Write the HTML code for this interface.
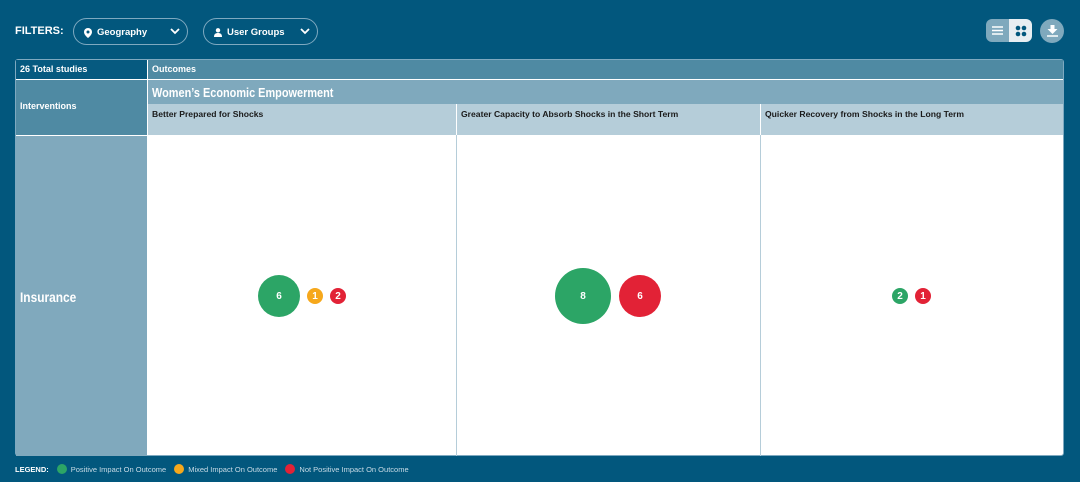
<!DOCTYPE html>
<html><head><meta charset="utf-8"><style>
*{box-sizing:border-box;margin:0;padding:0}
body{width:1080px;height:482px;background:#02577d;font-family:"Liberation Sans",sans-serif;position:relative;overflow:hidden;color:#fff}
.abs{position:absolute}
.pill{position:absolute;top:18px;height:27px;border:1px solid #7ea9c0;border-radius:14px;font-size:9.5px;font-weight:bold;display:flex;align-items:center;padding-left:10px;padding-top:2px}
.b{position:absolute;border-radius:50%;display:flex;align-items:center;justify-content:center;font-size:10px;font-weight:bold;color:#fff;transform:translate(-50%,-50%)}
.g{background:#2ca566}.o{background:#f6a81c}.r{background:#e22236}
.sub{position:absolute;top:104px;height:31px;background:#b5cdd9;color:#1a1a1a;font-size:8.6px;font-weight:bold;padding:5px 0 0 4px}
.leg{font-size:7.5px;color:#c8dbe6;display:flex;align-items:center}
.dot{width:10px;height:10px;border-radius:50%;margin:0 4px 0 8px}
</style></head><body>
<div class="abs" style="left:15px;top:25px;font-size:11px;font-weight:bold">FILTERS:</div>
<div class="pill" style="left:73px;width:115px"><svg width="8" height="10" viewBox="0 0 8 10"><path d="M4 0a4 4 0 0 1 4 4c0 3-4 6-4 6S0 7 0 4a4 4 0 0 1 4-4z" fill="#fff"/><circle cx="4" cy="4" r="1.5" fill="#02577d"/></svg><span style="margin-left:5px">Geography</span><svg class="abs" style="left:96px;top:9px" width="10" height="7" viewBox="0 0 10 7"><path d="M1 1l4 4 4-4" stroke="#fff" stroke-width="1.8" fill="none"/></svg></div>
<div class="pill" style="left:203px;width:115px"><svg width="8" height="9" viewBox="0 0 8 9"><circle cx="4" cy="2.3" r="2.2" fill="#fff"/><path d="M0 9c0-3 1.5-4 4-4s4 1 4 4z" fill="#fff"/></svg><span style="margin-left:5px">User Groups</span><svg class="abs" style="left:96px;top:9px" width="10" height="7" viewBox="0 0 10 7"><path d="M1 1l4 4 4-4" stroke="#fff" stroke-width="1.8" fill="none"/></svg></div>
<div class="abs" style="left:986px;top:19px;width:46px;height:23px;border-radius:6px;overflow:hidden;display:flex">
<div style="width:23px;background:#7fa9bd;display:flex;align-items:center;justify-content:center"><svg width="11" height="9"><path d="M0 1h11M0 4.5h11M0 8h11" stroke="#fff" stroke-width="1.6"/></svg></div>
<div style="width:23px;background:#e8eef2;display:flex;align-items:center;justify-content:center"><svg width="12" height="12"><circle cx="3" cy="3" r="2.3" fill="#02577d"/><circle cx="9" cy="3" r="2.3" fill="#02577d"/><circle cx="3" cy="9" r="2.3" fill="#02577d"/><circle cx="9" cy="9" r="2.3" fill="#02577d"/></svg></div></div>
<div class="abs" style="left:1040px;top:19px;width:24px;height:24px;border-radius:50%;background:#7fa9bd;display:flex;align-items:center;justify-content:center"><svg width="11" height="12"><path d="M3.5 0h4v4h3L5.5 9 .5 4h3z" fill="#fff"/><path d="M0 11h11" stroke="#fff" stroke-width="1.5"/></svg></div>

<div class="abs" style="left:15px;top:59px;width:1049px;height:397px;border:1px solid #7ea9c0;border-radius:3px;overflow:hidden;background:#fff"></div>
<div class="abs" style="left:16px;top:60px;width:131px;height:19px;background:#065a80;font-size:9px;font-weight:bold;padding:4px 0 0 4px">26 Total studies</div>
<div class="abs" style="left:148px;top:60px;width:915px;height:19px;background:#4f8aa3;font-size:9px;font-weight:bold;padding:4px 0 0 4px">Outcomes</div>
<div class="abs" style="left:16px;top:80px;width:131px;height:55px;background:#4f8aa3;font-size:9px;font-weight:bold;padding:21px 0 0 4px">Interventions</div>
<div class="abs" style="left:148px;top:80px;width:915px;height:24px;background:#7fa9bd"></div>
<div class="abs" style="left:152px;top:85px;font-size:13px;font-weight:bold;transform:scaleX(0.84);transform-origin:0 0;white-space:nowrap">Women’s Economic Empowerment</div>
<div class="sub" style="left:148px;width:308px">Better Prepared for Shocks</div>
<div class="sub" style="left:457px;width:303px">Greater Capacity to Absorb Shocks in the Short Term</div>
<div class="sub" style="left:761px;width:302px">Quicker Recovery from Shocks in the Long Term</div>
<div class="abs" style="left:16px;top:136px;width:131px;height:320px;background:#80a9bd"></div>
<div class="abs" style="left:20px;top:289px;font-size:14px;font-weight:bold;transform:scaleX(0.85);transform-origin:0 0">Insurance</div>
<div class="abs" style="left:456px;top:135px;width:1px;height:321px;background:#b5cdd9"></div>
<div class="abs" style="left:760px;top:135px;width:1px;height:321px;background:#b5cdd9"></div>

<div class="b g" style="left:279px;top:296px;width:42px;height:42px">6</div>
<div class="b o" style="left:315px;top:296px;width:16px;height:16px">1</div>
<div class="b r" style="left:338px;top:296px;width:16px;height:16px">2</div>
<div class="b g" style="left:583px;top:296px;width:56px;height:56px">8</div>
<div class="b r" style="left:640px;top:296px;width:42px;height:42px">6</div>
<div class="b g" style="left:900px;top:296px;width:16px;height:16px">2</div>
<div class="b r" style="left:923px;top:296px;width:16px;height:16px">1</div>

<div class="abs leg" style="left:15px;top:464px"><b style="color:#fff">LEGEND:</b><span class="dot g"></span>Positive Impact On Outcome<span class="dot o"></span>Mixed Impact On Outcome<span class="dot r"></span>Not Positive Impact On Outcome</div>
</body></html>
